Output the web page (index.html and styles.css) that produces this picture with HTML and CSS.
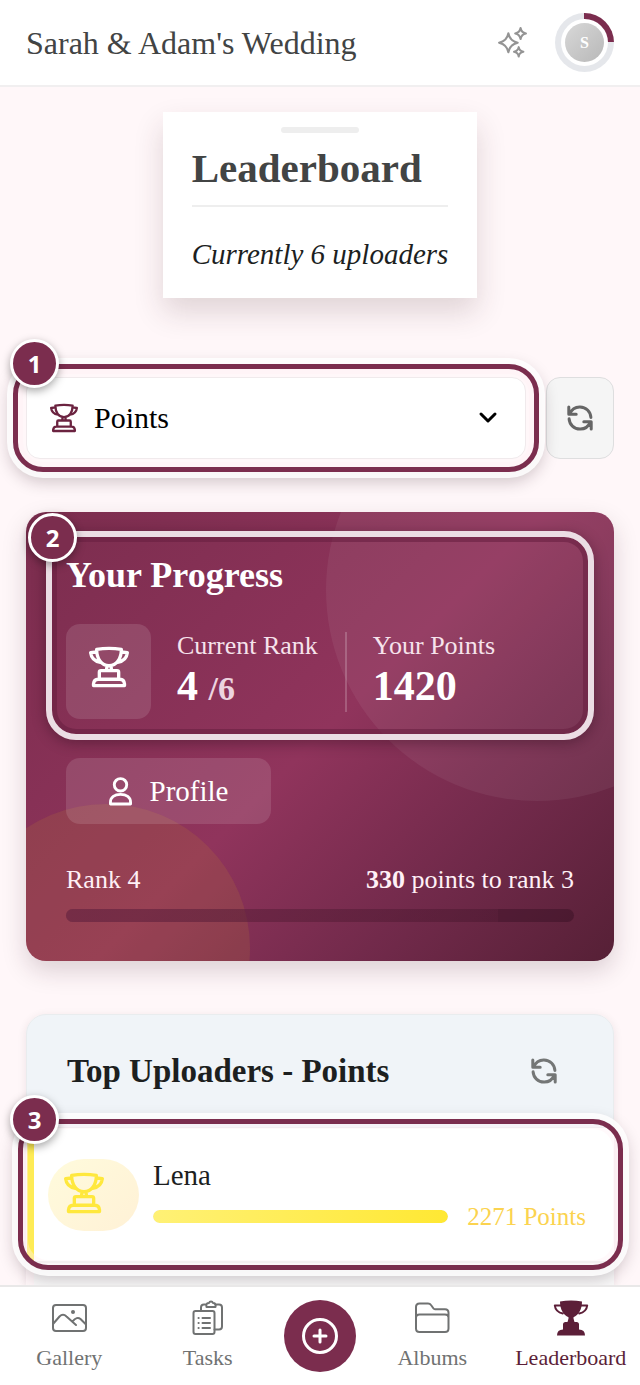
FILE: index.html
```html
<!DOCTYPE html>
<html lang="en">
<head>
    <meta charset="UTF-8">
    <meta name="viewport" content="width=device-width, initial-scale=1.0">
    <title>Leaderboard - Sarah &amp; Adam's Wedding</title>
    <link rel="stylesheet" href="styles.css">
</head>
<body>
    <!-- Shared icons -->
    <svg class="icon-defs" aria-hidden="true">
        <symbol id="icon-trophy" viewBox="0 0 24 24.500">
            <path d="M4.600 1.700Q12 .4 19.400 1.700C19.400 7.200 16.600 11.500 12 11.500S4.600 7.200 4.600 1.700zM4.600 3.200L1 3.700C1.400 7 3.800 8.900 6.800 9.400M19.400 3.200l3.600.5C22.600 7 20.200 8.900 17.200 9.400M10.800 11.500l-.3 2.900M13.200 11.500l.3 2.900M6.200 19.600v-4.200q0-1 1-1h9.600q1 0 1 1v4.200M2.700 23.400v-1q.3-2.800 2.800-2.800h13q2.500 0 2.800 2.800v1z"/>
        </symbol>
        <symbol id="icon-refresh" viewBox="-2 -2 28 28">
            <path d="M.8 1v7.200h7.400M1.500 8C4 2.600 8.200.8 12 .9c6 .1 10.500 4.600 10.900 10.500M23.200 23v-7.200h-7.400M22.500 16C20 21.400 15.800 23.200 12 23.100 6 23 1.500 18.500 1.100 12.800"/>
        </symbol>
    </svg>

    <header class="topbar">
        <span class="event-name">Sarah &amp; Adam's Wedding</span>
        <div class="topbar-actions">
            <button class="icon-btn" aria-label="Highlights">
                <svg class="icon sparkles" viewBox="0 0 28 30"><path d="M10 6c1 5.500 3.500 8 9 9.200-5.500 1.200-8 3.700-9 9.300-1-5.600-3.500-8.100-9-9.300C6.500 14 9 11.500 10 6zM21.800 1c.6 3.200 2 4.700 5.200 5.300-3.200.6-4.600 2.100-5.200 5.300-.6-3.200-2-4.700-5.200-5.300C19.800 5.700 21.200 4.200 21.800 1zM20 19.500c.5 2.800 1.700 4 4.500 4.500-2.800.5-4 1.700-4.500 4.500-.5-2.800-1.700-4-4.500-4.500 2.800-.5 4-1.700 4.500-4.500z"/></svg>
            </button>
            <button class="avatar" aria-label="Account"><span class="avatar-gap"><span class="avatar-face">S</span></span></button>
        </div>
    </header>

    <main class="content">
        <section class="title-card">
            <span class="handle"></span>
            <h1>Leaderboard</h1>
            <p>Currently 6 uploaders</p>
        </section>

        <div class="controls">
            <div class="select-box">
                <svg class="icon trophy-small"><use href="#icon-trophy"/></svg>
                <select aria-label="Sort by">
                    <option>Points</option>
                    <option>Photos</option>
                    <option>Likes</option>
                </select>
                <svg class="icon chevron" viewBox="0 0 18 12"><path d="M2 2l7 7 7-7"/></svg>
                <span class="ring ring-wide"></span>
                <span class="marker">1</span>
            </div>
            <button class="refresh-btn" aria-label="Refresh"><svg class="icon refresh"><use href="#icon-refresh"/></svg></button>
        </div>

        <section class="progress-card">
            <div class="circles"></div>
            <div class="summary">
                <h2>Your Progress</h2>
                <div class="stats">
                    <div class="stat-icon"><svg class="icon trophy-large"><use href="#icon-trophy"/></svg></div>
                    <div class="stat">
                        <span class="stat-label">Current Rank</span>
                        <strong>4 <span class="total">/6</span></strong>
                    </div>
                    <div class="stat">
                        <span class="stat-label">Your Points</span>
                        <strong>1420</strong>
                    </div>
                </div>
                <span class="ring ring-light"></span>
                <span class="marker">2</span>
            </div>
            <button class="profile-btn">
                <svg class="icon profile-icon" viewBox="0 0 24 30"><circle cx="12" cy="8" r="6.500"/><path d="M1.500 28v-1.500C1.500 21 6 18 12 18S22.500 21 22.500 26.500V28z"/></svg>
                Profile
            </button>
            <div class="rank-row">
                <span>Rank 4</span>
                <span><b>330</b> points to rank 3</span>
            </div>
            <div class="rank-track"><div class="rank-fill" style="width: 85%"></div></div>
        </section>

        <section class="board">
            <div class="board-head">
                <h2>Top Uploaders - Points</h2>
                <button class="icon-btn" aria-label="Refresh list"><svg class="icon refresh"><use href="#icon-refresh"/></svg></button>
            </div>
            <div class="entry">
                <div class="medal"><svg class="icon trophy-gold"><use href="#icon-trophy"/></svg></div>
                <div class="entry-info">
                    <span class="entry-name">Lena</span>
                    <div class="entry-score">
                        <div class="score-track"><div class="score-fill" style="width: 100%"></div></div>
                        <span class="score">2271 Points</span>
                    </div>
                </div>
                <span class="ring ring-row"></span>
                <span class="marker">3</span>
            </div>
            <div class="next-entry"></div>
        </section>
    </main>

    <nav class="bottom-nav">
        <a href="#gallery">
            <svg class="icon" viewBox="0 0 36 36"><rect x="2" y="5" width="33" height="26" rx="3"/><path d="M2 24l6.500-7.500q3.500-3.500 7 0L25 25M21.500 21.500q4.500-5.500 8-2.500l5 5"/><circle class="dot" cx="22" cy="12" r="2"/></svg>
            Gallery
        </a>
        <a href="#tasks">
            <svg class="icon" viewBox="0 0 36 36"><path d="M11 11V7.500q0-3 3-3h2.500M25 4.500h4q3 0 3 3v19q0 3-3 3h-4.500M16.500 7q-1-4 2.500-4 .5-1.500 2-1.500T23 3q3.500 0 2.500 4z"/><rect x="3.500" y="11" width="21" height="23" rx="2"/><path d="M12.500 18H20M12.500 23H20M12.500 28H20M8.500 18h.2M8.500 23h.2M8.500 28h.2"/></svg>
            Tasks
        </a>
        <button class="add-btn" aria-label="Add"><svg class="icon" viewBox="0 0 36 36"><circle cx="18" cy="18" r="16.500"/><path d="M18 12v12M12 18h12"/></svg></button>
        <a href="#albums">
            <svg class="icon" viewBox="0 0 36 36"><path d="M2 28.500V7q0-3.500 3.500-3.500H14q2 0 3 1.500l2.500 3.500q.5.700 1.500.7h10q3.500 0 3.500 3.500V28.500q0 3.500-3.500 3.500H5.500Q2 32 2 28.500M2 17.500q0-3 3.500-3h25.500q3.500 0 3.500 3"/></svg>
            Albums
        </a>
        <a href="#leaderboard" class="active">
            <svg class="icon" viewBox="0 0 36 36"><path class="solid" d="M7 1.500Q18-.5 29 1.500c0 8-3.500 13.500-8.500 15.800v1.200l1 3.500h2q2.500 0 2.500 2.500v5q6 0 6 6H4q0-6 6-6v-5Q10 22 12.500 22h2l1-3.500v-1.200C10.500 15 7 9.500 7 1.500z"/><path d="M8 5.500H1.800c.5 4.500 3.200 7 8 8M28 5.500h6.200c-.5 4.500-3.200 7-8 8"/></svg>
            Leaderboard
        </a>
    </nav>
</body>
</html>
```
FILE: styles.css
```css
* {
    box-sizing: border-box;
}
body {
    margin: 0;
    min-height: 100vh;
    display: flex;
    flex-direction: column;
    background-color: #fff7f9;
    color: #1d1f1f;
    font-family: "Liberation Serif", serif;
    font-size: 26px;
    line-height: 32px;
}
h1, h2, p {
    margin: 0;
}
button, select {
    font: inherit;
    color: inherit;
    border: none;
    background: none;
    padding: 0;
    cursor: pointer;
}
.icon-defs {
    position: absolute;
    width: 0;
    height: 0;
}
.icon {
    display: block;
    flex: none;
    fill: none;
    stroke: currentColor;
    stroke-width: 2;
    stroke-linecap: round;
    stroke-linejoin: round;
    overflow: visible;
}

/* Header */
.topbar {
    display: flex;
    justify-content: space-between;
    align-items: center;
    height: 87px;
    padding: 0 26px;
    background-color: #fff;
    border-bottom: 2px solid #f1eff0;
}
.event-name {
    font-size: 32px;
    color: #424444;
}
.topbar-actions {
    display: flex;
    align-items: center;
    gap: 28px;
}
.icon-btn {
    color: #747676;
}
.sparkles {
    width: 29px;
    height: 31px;
    color: #949494;
}
.avatar {
    width: 59px;
    height: 59px;
    padding: 6px;
    border-radius: 50%;
    background: conic-gradient(#7b2d4e 25%, #e5e7eb 0);
}
.avatar-gap {
    display: block;
    height: 100%;
    padding: 4px;
    border-radius: 50%;
    background-color: #fff;
}
.avatar-face {
    display: flex;
    align-items: center;
    justify-content: center;
    height: 100%;
    border-radius: 50%;
    background: linear-gradient(135deg, #d8d8d8, #b8b8b8);
    color: #fff;
    font-size: 16px;
    font-weight: bold;
}

/* Page */
.content {
    flex: 1;
    display: flex;
    flex-direction: column;
    padding: 25px 26px 0;
}
.title-card {
    align-self: center;
    padding: 15px 29px 26px;
    background-color: #fff;
    box-shadow: 0 14px 28px rgba(60, 30, 40, 0.16);
}
.handle {
    display: block;
    width: 78px;
    height: 6px;
    margin: 0 auto 10px;
    border-radius: 3px;
    background-color: #eee;
}
.title-card h1 {
    padding-bottom: 12px;
    border-bottom: 2px solid #eee;
    font-size: 41px;
    line-height: 50px;
    color: #424444;
}
.title-card p {
    padding-top: 29px;
    font-size: 29px;
    line-height: 36px;
    font-style: italic;
}
.controls {
    display: flex;
    gap: 20px;
    margin-top: 79px;
}
.select-box {
    position: relative;
    flex: 1;
    display: flex;
    align-items: center;
    height: 82px;
    padding: 0 28px 0 23px;
    border: 1px solid #f0eaec;
    border-radius: 14px;
    background-color: #fff;
    color: #000;
}
.select-box select {
    flex: 1;
    height: 80px;
    padding-left: 16px;
    appearance: none;
    font-size: 30px;
    outline: none;
}
.trophy-small {
    width: 28px;
    height: 30px;
    color: #6b2340;
}
.chevron {
    width: 18px;
    height: 12px;
    stroke-width: 3;
}
.refresh-btn {
    display: flex;
    align-items: center;
    justify-content: center;
    width: 68px;
    border: 1px solid #dededf;
    border-radius: 14px;
    background-color: #f5f5f5;
    color: #666;
}
.refresh {
    width: 28px;
    height: 28px;
    stroke-width: 3;
}

/* Numbered callouts */
.ring {
    position: absolute;
    border: 5px solid #7b2d4e;
    border-radius: 30px;
    box-shadow: 0 0 0 6px rgba(255, 255, 255, 0.85), 0 6px 16px 4px rgba(40, 20, 30, 0.22), inset 0 0 0 5px rgba(255, 240, 246, 0.4);
    pointer-events: none;
}
.ring-wide {
    inset: -14px;
}
.ring-row {
    inset: -9px -9px -9px -16px;
}
.ring-light {
    inset: -21px -20px;
    border: 6px solid #ebdde4;
    box-shadow: 0 3px 14px rgba(40, 10, 25, 0.4), inset 0 0 0 5px rgba(105, 32, 65, 0.6);
}
.marker {
    position: absolute;
    top: -39px;
    left: -17px;
    width: 49px;
    height: 49px;
    border: 3px solid #fff;
    border-radius: 50%;
    background-color: #7b2d4e;
    box-shadow: 0 3px 8px rgba(0, 0, 0, 0.35);
    color: #fff;
    font: bold 24px/43px "Open Sans", sans-serif;
    text-align: center;
}

/* Progress card */
.progress-card {
    position: relative;
    margin-top: 53px;
    padding: 40px 40px 39px;
    border-radius: 20px;
    background: linear-gradient(135deg, #7b2d4e 0%, #90345c 50%, #722a4b 75%, #562036 100%);
    box-shadow: 0 10px 24px rgba(50, 20, 35, 0.17);
    color: #fff;
}
.circles {
    position: absolute;
    inset: 0;
    overflow: hidden;
    border-radius: 20px;
}
.circles::before,
.circles::after {
    content: "";
    position: absolute;
    border-radius: 50%;
}
.circles::before {
    top: -133px;
    right: -134px;
    width: 422px;
    height: 422px;
    background-color: rgba(255, 255, 255, 0.06);
}
.circles::after {
    bottom: -131px;
    left: -64px;
    width: 288px;
    height: 288px;
    background-color: rgba(190, 130, 50, 0.18);
}
.summary,
.profile-btn,
.rank-row,
.rank-track {
    position: relative;
}
.summary h2 {
    font-size: 36px;
    line-height: 46px;
}
.summary .marker {
    left: -38px;
}
.stats {
    display: flex;
    align-items: center;
    margin-top: 26px;
}
.stat-icon {
    display: flex;
    align-items: center;
    justify-content: center;
    width: 85px;
    height: 95px;
    padding-bottom: 9px;
    border-radius: 14px;
    background-color: rgba(255, 255, 255, 0.12);
}
.trophy-large {
    width: 40px;
    height: 42px;
}
.stat {
    padding: 0 27px 0 26px;
}
.stat + .stat {
    border-left: 2px solid rgba(255, 255, 255, 0.2);
}
.stat-label {
    display: block;
    line-height: 28px;
    color: #f6e3ec;
}
.stat strong {
    display: block;
    font-size: 42px;
    line-height: 52px;
}
.total {
    font-size: 34px;
    line-height: 1;
    color: #ecd3df;
}
.profile-btn {
    display: flex;
    align-items: center;
    justify-content: center;
    gap: 18px;
    width: 205px;
    height: 66px;
    margin-top: 39px;
    border-radius: 14px;
    background-color: rgba(255, 255, 255, 0.12);
    font-size: 29px;
}
.profile-icon {
    width: 23px;
    height: 29px;
    stroke-width: 3;
}
.rank-row {
    display: flex;
    justify-content: space-between;
    margin-top: 40px;
    color: #fff0f6;
}
.rank-track {
    height: 13px;
    margin-top: 13px;
    overflow: hidden;
    border-radius: 7px;
    background-color: rgba(40, 10, 25, 0.35);
}
.rank-fill {
    height: 100%;
    background: linear-gradient(90deg, rgba(123, 45, 78, 0.5), rgba(123, 45, 78, 0.15));
}

/* List of uploaders */
.board {
    flex: 1;
    display: flex;
    flex-direction: column;
    margin-top: 53px;
    border-radius: 20px 20px 0 0;
    box-shadow: 0 2px 10px rgba(50, 20, 35, 0.09);
}
.board-head {
    display: flex;
    justify-content: space-between;
    align-items: center;
    height: 114px;
    padding: 0 55px 0 40px;
    border: 1px solid #e9ecee;
    border-radius: 20px 20px 0 0;
    background-color: #f0f4f8;
}
.board-head h2 {
    font-size: 33px;
    line-height: 40px;
}
.entry {
    position: relative;
    display: flex;
    align-items: center;
    gap: 14px;
    height: 133px;
    padding: 0 28px 0 14px;
    margin-left: 1px;
    border-left: 7px solid #feeb55;
    background-color: #fff;
}
.entry .marker {
    top: -33px;
    left: -24px;
}
.medal {
    display: flex;
    align-items: center;
    width: 91px;
    height: 72px;
    padding: 0 16px 3px;
    border-radius: 36px;
    background: linear-gradient(135deg, #fffbdc, #fff1d6);
}
.trophy-gold {
    width: 40px;
    height: 42px;
    color: #ffe83d;
}
.entry-info {
    flex: 1;
}
.entry-name {
    display: block;
    font-size: 29px;
    line-height: 36px;
}
.entry-score {
    display: flex;
    align-items: center;
    gap: 19px;
    margin-top: 8px;
}
.score-track {
    flex: 1;
    height: 13px;
    overflow: hidden;
    border-radius: 7px;
    background-color: #eee;
}
.score-fill {
    height: 100%;
    border-radius: 7px;
    background: linear-gradient(90deg, #fff176, #ffe833);
}
.score {
    font-size: 25px;
    color: #fbd34f;
}
.next-entry {
    flex: 1;
    min-height: 22px;
    margin-left: 8px;
    border-top: 2px solid #eee;
    background-color: #fafafa;
}

/* Bottom navigation */
.bottom-nav {
    position: sticky;
    bottom: 0;
    display: flex;
    align-items: center;
    height: 100px;
    border-top: 2px solid #e9e8e8;
    background-color: #fff;
}
.bottom-nav a {
    flex: 1 1 0;
    min-width: 0;
    display: flex;
    flex-direction: column;
    align-items: center;
    gap: 8px;
    font-size: 22px;
    line-height: 28px;
    color: #707272;
    text-decoration: none;
}
.bottom-nav a.active {
    color: #5c1f38;
}
.bottom-nav .icon {
    width: 36px;
    height: 36px;
}
.bottom-nav .add-btn .icon {
    stroke-width: 3;
}
.dot,
.solid {
    fill: currentColor;
    stroke: none;
}
.add-btn {
    display: flex;
    align-items: center;
    justify-content: center;
    width: 72px;
    height: 72px;
    margin: 0 7px;
    border-radius: 50%;
    background-color: #7b2d4e;
    color: #fff;
}
```
